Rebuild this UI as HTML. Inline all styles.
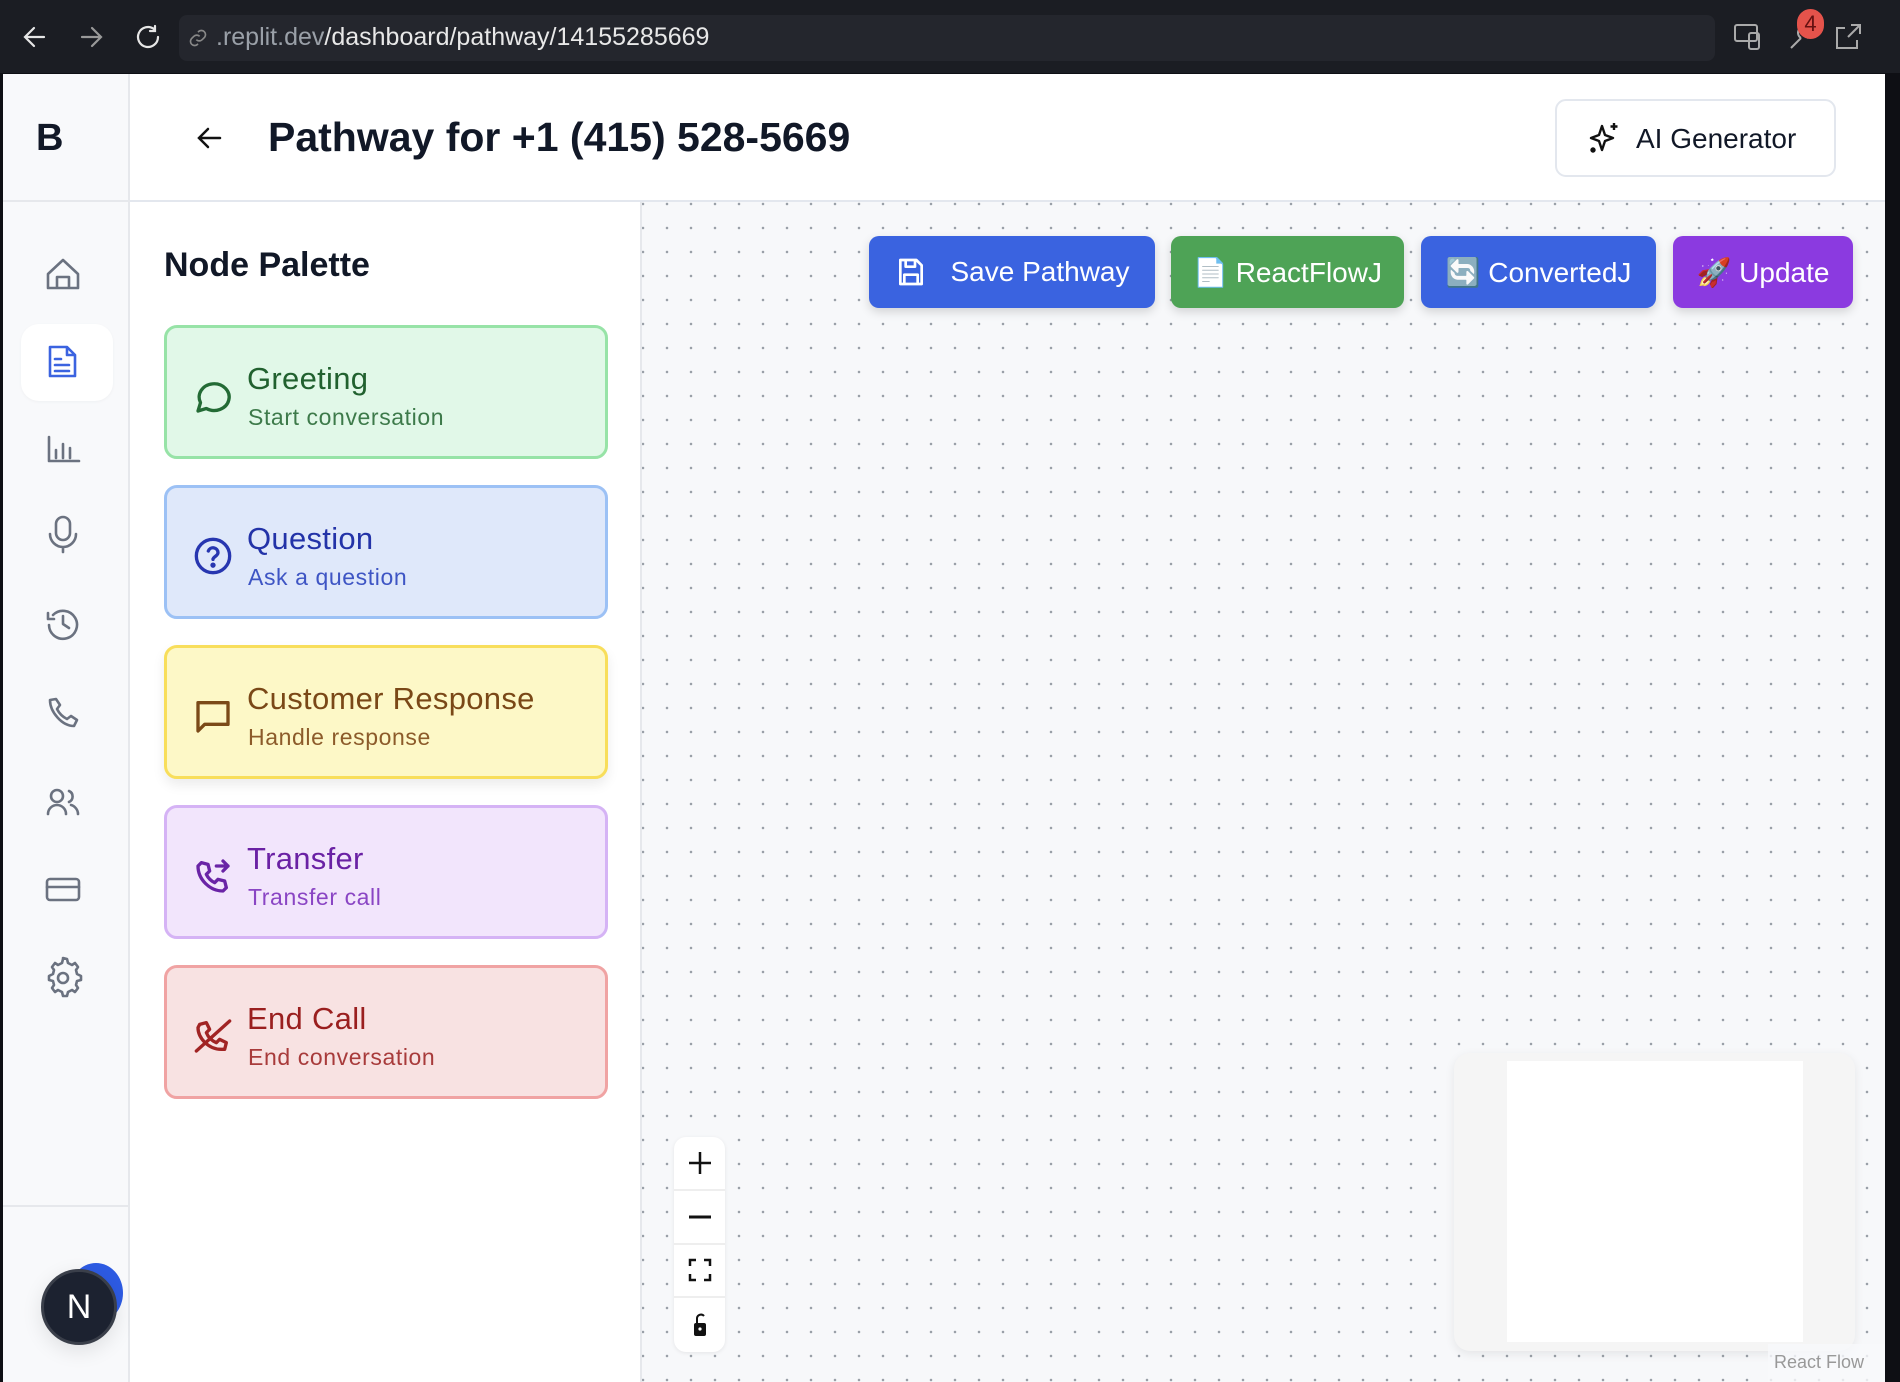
<!DOCTYPE html>
<html><head><meta charset="utf-8"><style>
*{box-sizing:border-box;margin:0;padding:0}
body{width:1900px;height:1382px;overflow:hidden;background:#0e0f14;font-family:"Liberation Sans",sans-serif;position:relative}
.abs{position:absolute}
.bar{left:0;top:0;width:1900px;height:73px;background:#1b1d23}
.url{left:179px;top:15px;width:1536px;height:46px;background:#24262d;border-radius:8px}
.sidebar{left:3px;top:74px;width:127px;height:1308px;background:#f8f9fb;border-right:2px solid #e6e8ec}
.header{left:130px;top:74px;width:1755px;height:128px;background:#fff;border-bottom:2px solid #e3e7ee}
.palette{left:130px;top:202px;width:512px;height:1180px;background:#fff;border-right:2px solid #e6e8ec}
.canvas{left:642px;top:202px;width:1243px;height:1180px;background-color:#f7f8fa;background-image:radial-gradient(circle,#9aa0a8 1.2px,transparent 1.4px);background-size:24px 24px;background-position:-11px -10px}
.card{position:absolute;left:164px;width:444px;height:134px;border:3px solid;border-radius:13px}
.card svg{position:absolute;left:26px;top:48px}
.card .t{position:absolute;left:80px;top:33px;font-size:31px;letter-spacing:.3px}
.card .s{position:absolute;left:81px;top:76px;font-size:23px;letter-spacing:.6px}
.btn{position:absolute;top:236px;height:72px;border-radius:10px;color:#fff;font-size:28px;display:flex;align-items:center;justify-content:center;gap:10px;box-shadow:0 4px 10px rgba(0,0,0,.15)}
.ctrl{left:674px;top:1137px;width:51px;height:215px;background:#fff;border-radius:12px;box-shadow:0 1px 4px rgba(0,0,0,.08)}
.ctrl div{height:53.75px;border-bottom:2px solid #eee;display:flex;align-items:center;justify-content:center}
</style></head><body>
<div class="abs bar"></div>
<svg class="abs" style="left:22px;top:24px" width="140" height="26" viewBox="0 0 140 26" fill="none" stroke="#e6e6e6" stroke-width="2.2" stroke-linecap="round">
<path d="M22 13H4M12 4 3 13l9 9"/><path d="M60 13h18M70 4l9 9-9 9" stroke="#999"/><path d="M136 13a10 10 0 1 1-4-8M133 2v5h-5"/></svg>
<div class="abs url"></div>
<svg class="abs" style="left:188px;top:28px" width="20" height="20" viewBox="0 0 24 24" fill="none" stroke="#888" stroke-width="2"><path d="M10 14a5 5 0 0 0 7 0l3-3a5 5 0 0 0-7-7l-1 1M14 10a5 5 0 0 0-7 0l-3 3a5 5 0 0 0 7 7l1-1"/></svg>
<div class="abs" style="left:216px;top:23px;font-size:25px;color:#9aa0a8">.replit.dev<span style="color:#e8e8e8">/dashboard/pathway/14155285669</span></div>
<svg class="abs" style="left:1733px;top:22px" width="140" height="30" viewBox="0 0 140 30" fill="none" stroke="#aaa" stroke-width="2"><rect x="2" y="3" width="22" height="16" rx="2"/><rect x="16" y="11" width="10" height="16" rx="2"/><path d="M58 26l10-10M68 16a6 6 0 1 1 6 0"/><path d="M112 6h-8v20h20v-8M118 3h9v9M127 3l-12 12"/></svg>
<div class="abs" style="left:1797px;top:9px;width:27px;height:30px;border-radius:14px;background:#e5534b;color:#611;font-size:22px;text-align:center;line-height:30px">4</div>

<div class="abs sidebar"></div>
<div class="abs" style="left:3px;top:200px;width:127px;height:2px;background:#e6e8ec"></div>
<div class="abs" style="left:3px;top:1205px;width:127px;height:2px;background:#e6e8ec"></div>
<div class="abs" style="left:36px;top:117px;font-size:38px;font-weight:bold;color:#111827">B</div>
<div class="abs" style="left:21px;top:324px;width:92px;height:77px;background:#fff;border-radius:18px;box-shadow:0 1px 3px rgba(0,0,0,.04)"></div>
<svg class="abs" style="left:43px;top:0" width="40" height="1000" viewBox="0 0 40 1000" fill="none" stroke="#6b7280" stroke-width="2.6" stroke-linecap="round" stroke-linejoin="round">
<path d="M5 288v-14l15-14 15 14v14z M14 288v-11h12v11"/>
<g stroke="#3b63e0"><path d="M7 347h17l8 8v21H7z M24 347v8h8 M12 359h6M12 365h14M12 371h14"/></g>
<path d="M6 437v24h30 M13 458v-8M20 458v-14M27 458v-10"/>
<path d="M13 524a7 7 0 0 1 14 0v9a7 7 0 0 1-14 0z M7 534a13 13 0 0 0 26 0M20 547v5"/>
<path d="M6 625a14 14 0 1 0 4-10M5 613v6h6M20 616v8l6 4"/>
<path d="M7 700c0 12 12 26 24 26l3-6-6-4-4 3c-4-2-8-6-10-10l3-4-4-6z"/>
<path d="M5 814a9 9 0 0 1 18 0M14 790a6 6 0 1 1 0 12 6 6 0 0 1 0-12M26 791a6 6 0 0 1 0 11M28 805c4 1 7 5 7 9"/>
<rect x="4" y="879" width="32" height="21" rx="3"/><path d="M4 887h32"/>
<circle cx="20" cy="978" r="5"/><path d="M20 962l4 1 1 4 4 2 3-2 3 4-2 3 1 4 4 2v4l-4 1-1 4 2 3-3 4-3-2-4 2-1 4h-4l-1-4-4-2-3 2-3-4 2-3-1-4-4-1v-4l4-2 1-4-2-3 3-4 3 2 4-2 1-4z" transform="translate(0,-4)"/>
</svg>
<div class="abs" style="left:69px;top:1263px;width:54px;height:60px;border-radius:50%;background:#2d5be3"></div>
<div class="abs" style="left:41px;top:1269px;width:76px;height:76px;border-radius:50%;background:#1c2230;border:3px solid #3a3f4a;color:#fff;font-size:34px;text-align:center;line-height:70px;box-shadow:0 6px 20px rgba(0,0,0,.1)">N</div>

<div class="abs header"></div>
<svg class="abs" style="left:197px;top:126px" width="26" height="24" viewBox="0 0 26 24" fill="none" stroke="#111" stroke-width="2.5" stroke-linecap="round"><path d="M23 12H3M11 3l-9 9 9 9"/></svg>
<div class="abs" style="left:268px;top:114px;font-size:41px;font-weight:bold;color:#111827">Pathway for +1 (415) 528-5669</div>
<div class="abs" style="left:1555px;top:99px;width:281px;height:78px;border:2px solid #e3e7ee;border-radius:11px;background:#fff"></div>
<svg class="abs" style="left:1589px;top:121px" width="32" height="34" viewBox="0 0 32 34" fill="none" stroke="#111" stroke-width="2.4" stroke-linejoin="round"><path d="M13 5l3 9 8 3-8 3-3 9-3-9-8-3 8-3z M25 2v7M21.5 5.5h7"/><circle cx="4" cy="29" r="1.5" fill="#111"/></svg>
<div class="abs" style="left:1636px;top:123px;font-size:28px;color:#111827">AI Generator</div>

<div class="abs palette"></div>
<div class="abs" style="left:164px;top:246px;font-size:34px;font-weight:bold;color:#111827">Node Palette</div>

<div class="card" style="top:325px;background:#e1f8e8;border-color:#97e3a7">
<svg width="40" height="40" viewBox="0 0 24 24" fill="none" stroke="#236b35" stroke-width="2" stroke-linejoin="round"><path d="M3 21l1.5-5A9 8 0 1 1 8 19.5z"/></svg>
<div class="t" style="color:#21612f">Greeting</div><div class="s" style="color:#3d7a4a">Start conversation</div></div>
<div class="card" style="top:485px;background:#dfe8fa;border-color:#9cc1f5">
<svg width="40" height="40" viewBox="0 0 24 24" fill="none" stroke="#2736b0" stroke-width="2" stroke-linecap="round"><circle cx="12" cy="12" r="10"/><path d="M9.2 9a3 3 0 0 1 5.8 1c0 2-3 2.5-3 4"/><circle cx="12" cy="17.5" r=".6" fill="#2736b0"/></svg>
<div class="t" style="color:#2333a8">Question</div><div class="s" style="color:#3e55c4">Ask a question</div></div>
<div class="card" style="top:645px;background:#fdf8c7;border-color:#f8de5b;box-shadow:0 6px 12px rgba(0,0,0,.08)">
<svg width="40" height="40" viewBox="0 0 24 24" fill="none" stroke="#7b4a18" stroke-width="2" stroke-linejoin="round"><path d="M3 4h18v13H7l-4 4z"/></svg>
<div class="t" style="color:#7a4817">Customer Response</div><div class="s" style="color:#8c5b2a">Handle response</div></div>
<div class="card" style="top:805px;background:#f2e5fc;border-color:#d5b3f5">
<svg width="40" height="40" viewBox="0 0 24 24" fill="none" stroke="#6a24a6" stroke-width="2" stroke-linecap="round" stroke-linejoin="round"><path d="M14 6h7M18 3l3 3-3 3"/><path d="M5 4l4 1 1 4-2 2a11 11 0 0 0 5 5l2-2 4 1 1 4-2 2C10 21 3 14 3 6z"/></svg>
<div class="t" style="color:#6a21a4">Transfer</div><div class="s" style="color:#8a45c4">Transfer call</div></div>
<div class="card" style="top:965px;background:#f8e2e2;border-color:#f0a3a3">
<svg width="40" height="40" viewBox="0 0 24 24" fill="none" stroke="#a12424" stroke-width="2" stroke-linecap="round" stroke-linejoin="round"><path d="M22 3L2 21"/><path d="M4 5l4-1 2 4-2 2a11 11 0 0 0 6 6l2-2 4 2-1 4h-2c-8 0-14-7-14-13z"/></svg>
<div class="t" style="color:#9a1f1f">End Call</div><div class="s" style="color:#a83b3b">End conversation</div></div>

<div class="abs canvas"></div>
<div class="btn" style="left:869px;width:286px;background:#3a63e0"><svg width="32" height="34" viewBox="0 0 24 24" fill="none" stroke="#fff" stroke-width="2" stroke-linejoin="round"><path d="M4 3h12l4 4v14H4z M8 3v5h7V3 M7 21v-7h10v7"/></svg><span style="margin-left:14px">Save Pathway</span></div>
<div class="btn" style="left:1171px;width:233px;background:#4ea356">📄 ReactFlowJ</div>
<div class="btn" style="left:1421px;width:235px;background:#3a63e0">🔄 ConvertedJ</div>
<div class="btn" style="left:1673px;width:180px;background:#8b3ae0">🚀 Update</div>

<div class="abs ctrl">
<div><svg width="26" height="26" stroke="#111" stroke-width="2.5"><path d="M13 2v22M2 13h22"/></svg></div>
<div><svg width="26" height="26" stroke="#111" stroke-width="3"><path d="M2 13h22"/></svg></div>
<div><svg width="26" height="26" fill="none" stroke="#111" stroke-width="2.5"><path d="M3 9V3h6M17 3h6v6M23 17v6h-6M9 23H3v-6"/></svg></div>
<div style="border:0"><svg width="26" height="28" viewBox="0 0 26 28"><path d="M10 12V7a4 4 0 0 1 7-2" fill="none" stroke="#111" stroke-width="2"/><rect x="7" y="12" width="12" height="13" rx="2" fill="#111"/><circle cx="13" cy="18" r="1.6" fill="#fff"/></svg></div>
</div>
<div class="abs" style="left:1454px;top:1053px;width:401px;height:298px;background:#f5f5f5;border-radius:16px;box-shadow:0 3px 10px rgba(0,0,0,.08)"></div>
<div class="abs" style="left:1507px;top:1061px;width:296px;height:281px;background:#fff"></div>
<div class="abs" style="left:1768px;top:1344px;width:117px;height:38px;background:rgba(248,249,251,.8)"></div>
<div class="abs" style="left:1774px;top:1352px;font-size:18px;color:#999">React Flow</div>
</body></html>
